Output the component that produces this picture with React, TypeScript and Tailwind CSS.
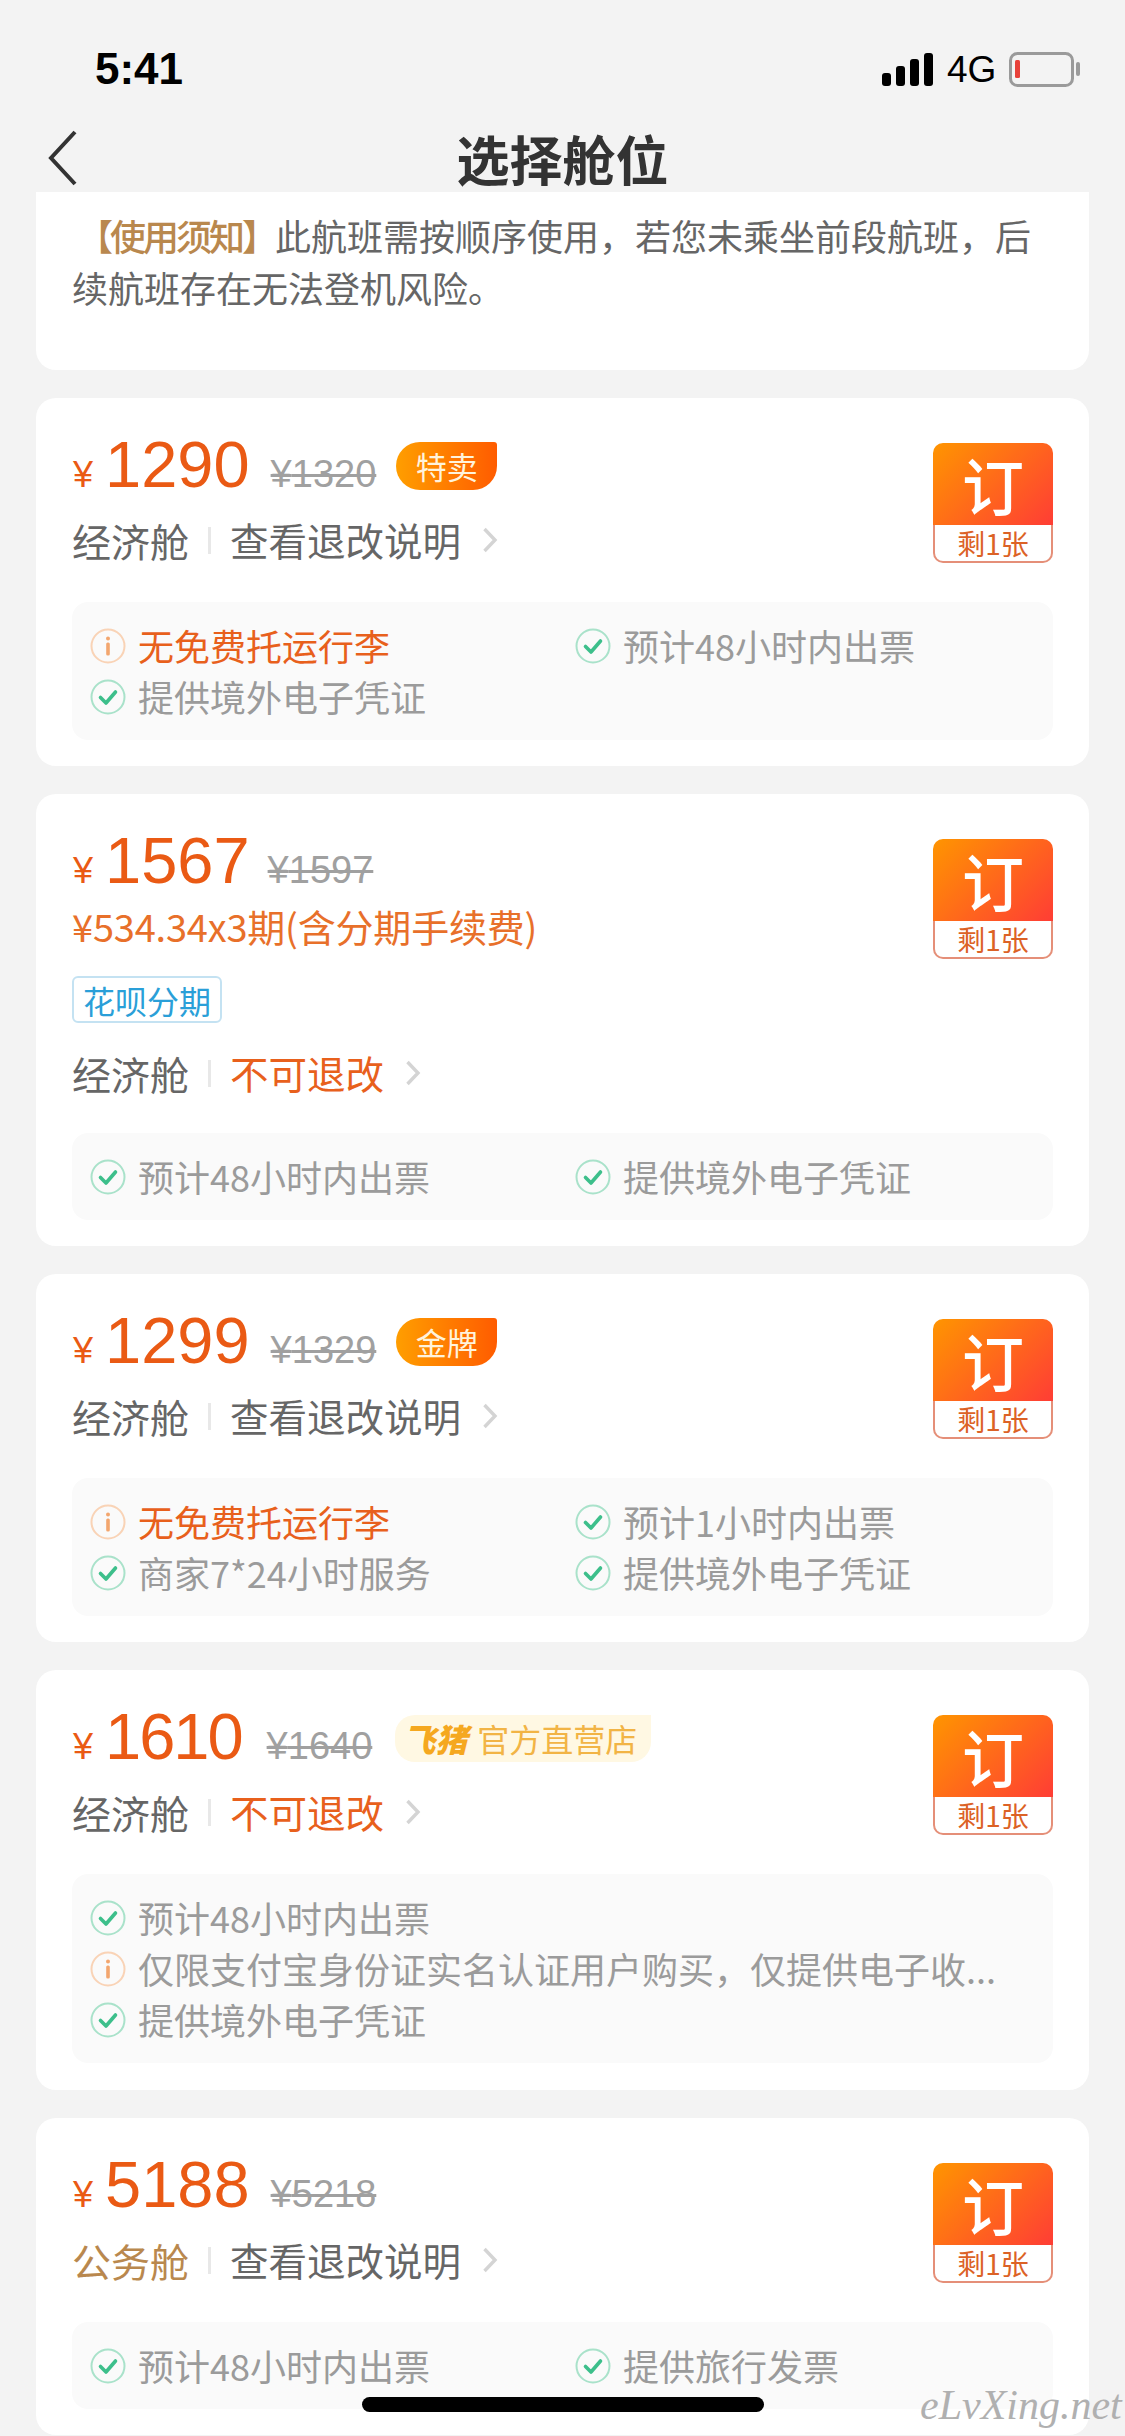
import React from 'react';

const cjk = { fontFamily: '"Noto Sans CJK SC", "Liberation Sans", sans-serif' };

type Feature = { text: string; warn?: boolean; hot?: boolean };

interface Fare {
  price: string;
  priceClass?: string;
  was: string;
  wasGap: string;
  badge?: string;
  official?: boolean;
  installment?: string;
  cabin?: string;
  rule: string;
  ruleHot?: boolean;
  oneCol?: boolean;
  features: Feature[];
}

const CheckIcon = () => (
  <svg width="36" height="36" viewBox="0 0 36 36" fill="none" className="shrink-0">
    <circle cx="18" cy="18" r="16.5" stroke="#a9e2ca" strokeWidth="2" />
    <path d="M10.5 18.5 L16 24 L25.5 13" stroke="#3dbf8b" strokeWidth="3.6" strokeLinecap="round" strokeLinejoin="round" />
  </svg>
);

const InfoIcon = () => (
  <svg width="36" height="36" viewBox="0 0 36 36" fill="none" className="shrink-0">
    <circle cx="18" cy="18" r="16.5" stroke="#f9d3b6" strokeWidth="2" />
    <circle cx="18" cy="10.5" r="2" fill="#f3a66e" />
    <rect x="16.2" y="14.5" width="3.6" height="13" rx="1.5" fill="#f3a66e" />
  </svg>
);

const Chevron = () => (
  <svg width="16" height="26" viewBox="0 0 16 26" fill="none">
    <path d="M2.5 2 L13 13 L2.5 24" stroke="#d4d4d4" strokeWidth="3.4" />
  </svg>
);

const FeatureItem = ({ f }: { f: Feature }) => (
  <div className="flex items-center h-[51px] gap-[12px] min-w-0">
    {f.warn ? <InfoIcon /> : <CheckIcon />}
    <span className={`text-[36px] leading-[51px] whitespace-nowrap ${f.hot ? 'text-[#e8601c]' : 'text-[#9b9b9b]'}`} style={cjk}>
      {f.text}
    </span>
  </div>
);

const BuyButton = () => (
  <div className="w-[120px] h-[120px] mt-[1px] flex flex-col shrink-0" style={cjk}>
    <div className="h-[82px] rounded-t-[10px] bg-[linear-gradient(135deg,#ff9500,#ff3d35)] flex items-center justify-center">
      <span className="text-[62px] leading-none font-medium text-white">订</span>
    </div>
    <div className="h-[38px] rounded-b-[10px] border-x-2 border-b-2 border-[#e58f78] bg-white flex items-center justify-center">
      <span className="text-[28px] leading-none text-[#dc6226]">剩1张</span>
    </div>
  </div>
);

const FareCard = ({ fare }: { fare: Fare }) => (
  <div className={`mt-[28px] mx-[36px] bg-white rounded-[20px] px-[36px] pt-[44px] ${fare.oneCol ? 'pb-[27px]' : 'pb-[26px]'}`}>
    <div className="flex justify-between items-start">
      <div className="min-w-0">
        <div className="flex items-center h-[48px]">
          <div className="flex items-baseline pt-[8px] text-[#ea5a14]" style={{ fontFamily: '"Liberation Sans", sans-serif' }}>
            <span className="text-[36px] leading-[48px] ml-[1px] mr-[11px] w-[21px]">¥</span>
            <span className={`text-[65px] leading-[48px] ${fare.priceClass ?? ''}`}>{fare.price}</span>
            <span className={`text-[38px] leading-[48px] text-[#a0a0a0] line-through decoration-[3px] ${fare.wasGap}`}>¥{fare.was}</span>
          </div>
          {fare.badge && (
            <span
              className="ml-[20px] w-[101px] h-[48px] flex items-center justify-center rounded-tl-[24px] rounded-bl-[24px] rounded-br-[24px] rounded-tr-[3px] bg-[linear-gradient(90deg,#ff9e00,#ff5c00)] text-[31px] text-[#fff3dc]"
              style={cjk}
            >
              {fare.badge}
            </span>
          )}
          {fare.official && (
            <span className="ml-[23px] h-[47px] w-[256px] flex items-center pl-[8px] gap-[10px] rounded-tl-[20px] rounded-bl-[20px] rounded-br-[20px] bg-[#fff8e3] whitespace-nowrap" style={cjk}>
              <span className="text-[32px] font-black italic text-[#f5a81f]">飞猪</span>
              <span className="text-[32px] text-[#f2b445]">官方直营店</span>
            </span>
          )}
        </div>
        {fare.installment && (
          <>
            <div className="mt-[15px] text-[38px] leading-[50px] tracking-[-0.2px] text-[#e8702a] whitespace-nowrap" style={cjk}>
              {fare.installment}
            </div>
            <div className="mt-[25px] w-[150px] h-[47px] border-2 border-[#c4e2f2] rounded-[6px] flex items-center justify-center text-[32px] text-[#2a9fd8]" style={cjk}>
              花呗分期
            </div>
          </>
        )}
        <div className={`flex items-center h-[48px] ${fare.installment ? 'mt-[26px]' : 'mt-[26px]'}`} style={cjk}>
          <span className={`text-[39px] ${fare.cabin ? 'text-[#b9884e]' : 'text-[#666666]'}`}>{fare.cabin ?? '经济舱'}</span>
          <span className="ml-[19px] mr-[19px] w-[3px] h-[27px] bg-[#e8e8e8]" />
          <span className={`text-[38.5px] ${fare.ruleHot ? 'text-[#e8601c]' : 'text-[#666666]'}`}>{fare.rule}</span>
          <span className="ml-[21px] flex"><Chevron /></span>
        </div>
      </div>
      <BuyButton />
    </div>

    <div className={`${fare.installment ? 'mt-[36px]' : 'mt-[38px]'} bg-[#fafafa] rounded-[16px] pl-[18px] py-[18px] pr-[18px] ${fare.oneCol ? '' : 'grid grid-cols-[485px_1fr]'}`}>
      {fare.features.map((f, i) => (
        <FeatureItem key={i} f={f} />
      ))}
    </div>
  </div>
);

const fares: Fare[] = [
  {
    price: '1290', was: '1320', wasGap: 'ml-[21px]', badge: '特卖', rule: '查看退改说明',
    features: [{ text: '无免费托运行李', warn: true, hot: true }, { text: '预计48小时内出票' }, { text: '提供境外电子凭证' }],
  },
  {
    price: '1567', was: '1597', wasGap: 'ml-[18px]', installment: '¥534.34x3期(含分期手续费)', rule: '不可退改', ruleHot: true,
    features: [{ text: '预计48小时内出票' }, { text: '提供境外电子凭证' }],
  },
  {
    price: '1299', was: '1329', wasGap: 'ml-[21px]', badge: '金牌', rule: '查看退改说明',
    features: [{ text: '无免费托运行李', warn: true, hot: true }, { text: '预计1小时内出票' }, { text: '商家7*24小时服务' }, { text: '提供境外电子凭证' }],
  },
  {
    price: '1610', priceClass: 'tracking-[-2px]', was: '1640', wasGap: 'ml-[25px]', official: true, rule: '不可退改', ruleHot: true, oneCol: true,
    features: [{ text: '预计48小时内出票' }, { text: '仅限支付宝身份证实名认证用户购买，仅提供电子收...', warn: true }, { text: '提供境外电子凭证' }],
  },
  {
    price: '5188', was: '5218', wasGap: 'ml-[21px]', cabin: '公务舱', rule: '查看退改说明',
    features: [{ text: '预计48小时内出票' }, { text: '提供旅行发票' }],
  },
];

export default function App() {
  return (
    <div className="relative w-[1125px] h-[2436px] overflow-hidden bg-[#f3f3f3]">
      {/* status bar + nav */}
      <div className="h-[192px]">
        <div className="pt-[47px] h-[91px] pl-[95px] pr-[44px] flex items-center justify-between">
          <span className="text-[44px] leading-none font-bold text-black" style={{ fontFamily: '"Liberation Sans", sans-serif' }}>5:41</span>
          <div className="flex items-center">
            <svg width="52" height="33" viewBox="0 0 52 33" fill="#000">
              <rect x="0" y="20" width="9" height="13" rx="3" />
              <rect x="14" y="13" width="9" height="20" rx="3" />
              <rect x="28" y="6" width="9" height="27" rx="3" />
              <rect x="42" y="0" width="9" height="33" rx="3" />
            </svg>
            <span className="ml-[13px] w-[50px] text-[37px] leading-none text-black" style={{ fontFamily: '"Liberation Sans", sans-serif' }}>4G</span>
            <svg width="72" height="35" viewBox="0 0 72 35" fill="none" className="ml-[12px]">
              <rect x="1.5" y="1.5" width="62" height="32" rx="7" stroke="#9a9a9a" strokeWidth="3" />
              <rect x="6" y="8" width="5" height="18" rx="1.5" fill="#e8413a" />
              <rect x="67" y="10" width="4" height="14" rx="2" fill="#9a9a9a" />
            </svg>
          </div>
        </div>
        <div className="mt-[33px] h-[68px] grid grid-cols-[1fr_auto_1fr] items-center pl-[48px]">
          <svg width="30" height="56" viewBox="0 0 30 56" fill="none">
            <path d="M27 2 L3 28 L27 54" stroke="#333333" strokeWidth="4" />
          </svg>
          <span className="text-[53px] leading-none font-bold text-[#333333] -ml-[48px]" style={cjk}>选择舱位</span>
          <span />
        </div>
      </div>

      {/* notice */}
      <div className="mx-[36px] h-[178px] bg-white rounded-b-[20px] px-[36px] pt-[17px] text-[36px] leading-[52px] text-[#666666] indent-[5px]" style={cjk}>
        <span className="text-[#b9884e] font-medium tracking-[-3px]">【使用须知】</span>
        <span>此航班需按顺序使用，若您未乘坐前段航班，后续航班存在无法登机风险。</span>
      </div>

      {fares.map((fare, i) => (
        <FareCard key={i} fare={fare} />
      ))}

      {/* home indicator + watermark */}
      <div className="absolute left-[362px] top-[2397px] w-[402px] h-[15px] rounded-full bg-black" />
      <div className="absolute left-[920px] top-[2380px] text-[42px] leading-[50px] italic text-[#b0b0b0] whitespace-nowrap" style={{ fontFamily: '"Liberation Serif", serif' }}>
        eLvXing.net
      </div>
    </div>
  );
}
